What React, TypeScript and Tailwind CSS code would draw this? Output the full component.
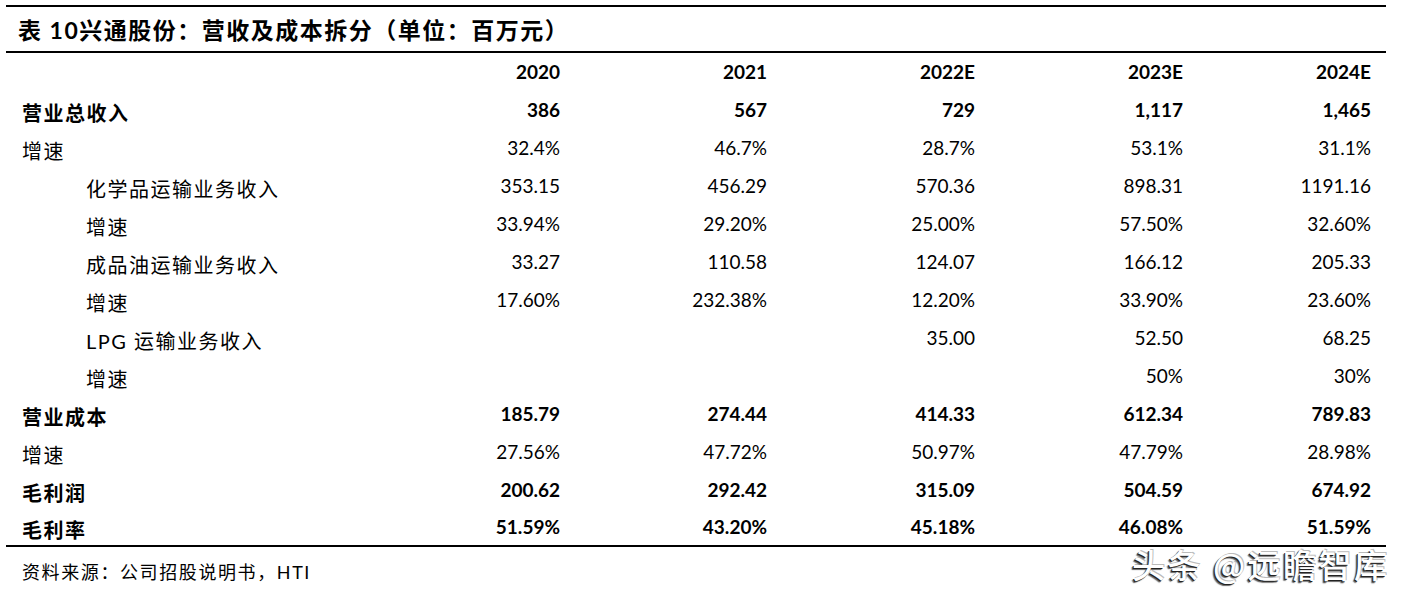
const years = ["2020", "2021", "2022E", "2023E", "2024E"];

interface Row {
  label: string;
  values: string[];
  bold?: boolean;
  indent?: boolean;
}

const rows: Row[] = [
  { label: "营业总收入", values: ["386", "567", "729", "1,117", "1,465"], bold: true },
  { label: "增速", values: ["32.4%", "46.7%", "28.7%", "53.1%", "31.1%"] },
  { label: "化学品运输业务收入", values: ["353.15", "456.29", "570.36", "898.31", "1191.16"], indent: true },
  { label: "增速", values: ["33.94%", "29.20%", "25.00%", "57.50%", "32.60%"], indent: true },
  { label: "成品油运输业务收入", values: ["33.27", "110.58", "124.07", "166.12", "205.33"], indent: true },
  { label: "增速", values: ["17.60%", "232.38%", "12.20%", "33.90%", "23.60%"], indent: true },
  { label: "LPG 运输业务收入", values: ["", "", "35.00", "52.50", "68.25"], indent: true },
  { label: "增速", values: ["", "", "", "50%", "30%"], indent: true },
  { label: "营业成本", values: ["185.79", "274.44", "414.33", "612.34", "789.83"], bold: true },
  { label: "增速", values: ["27.56%", "47.72%", "50.97%", "47.79%", "28.98%"] },
  { label: "毛利润", values: ["200.62", "292.42", "315.09", "504.59", "674.92"], bold: true },
  { label: "毛利率", values: ["51.59%", "43.20%", "45.18%", "46.08%", "51.59%"], bold: true },
];

const gridCols = "grid grid-cols-[346px_208px_207px_208px_208px_188px]";

export default function App() {
  return (
    <main className="relative h-[593px] w-[1411px] overflow-hidden bg-white font-['Lato','Noto_Sans_CJK_SC',sans-serif] text-black">
      <div className="ml-[6px] w-[1380px] pt-[5px]">
        <div className="h-[2px] bg-black" />
        <div className="flex h-[44px] items-center pl-[12px] pt-[2px] text-[23px] font-bold tracking-[1.5px]">
          表 10兴通股份：营收及成本拆分（单位：百万元）
        </div>
        <div className="h-[2px] bg-black" />

        <div className={`${gridCols} h-[38px] items-center text-[19px] font-bold`}>
          <div />
          {years.map((y) => (
            <div key={y} className="text-right">
              {y}
            </div>
          ))}
        </div>

        {rows.map((row, i) => (
          <div
            key={i}
            className={`${gridCols} items-center text-[19px] leading-[24px] ${i === rows.length - 1 ? "h-[36px]" : "h-[38px]"} ${row.bold ? "font-bold" : "font-normal"}`}
          >
            <div
              className={`pt-[6px] text-[20px] tracking-[1.5px] ${row.indent ? "pl-[80px]" : "pl-[16px]"}`}
            >
              {row.label}
            </div>
            {row.values.map((v, j) => (
              <div key={j} className="text-right">
                {v}
              </div>
            ))}
          </div>
        ))}

        <div className="h-[2px] bg-black" />
        <div className="flex h-[50px] items-center pl-[16px] text-[18px] tracking-[1.6px]">
          资料来源：公司招股说明书，HTI
        </div>
      </div>

      <div className="absolute left-[1132px] top-[547px] text-[33px] font-medium leading-[34px] tracking-[2.5px] text-white font-['Noto_Sans_CJK_SC',sans-serif] [text-shadow:-1px_1px_0_#222,-2px_2px_1px_#666,1px_-1px_0_#bbb]">
        头条 @远瞻智库
      </div>
    </main>
  );
}
